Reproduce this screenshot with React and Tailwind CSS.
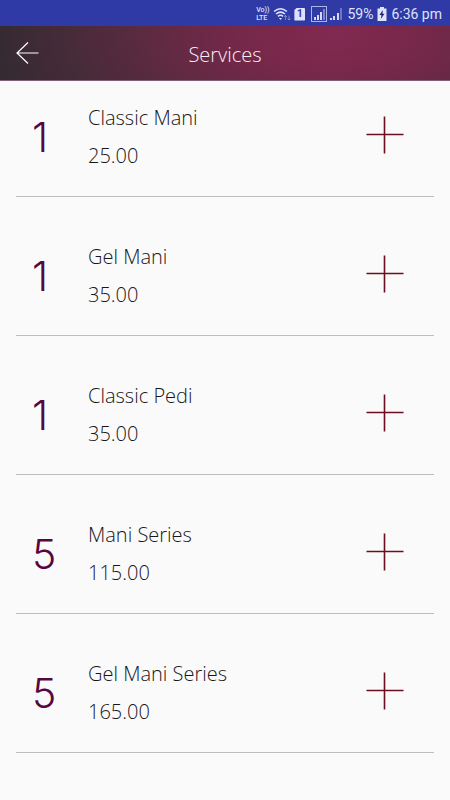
const services = [
    { id: 1, count: 1, name: "Classic Mani", price: "25.00" },
    { id: 2, count: 1, name: "Gel Mani", price: "35.00" },
    { id: 3, count: 1, name: "Classic Pedi", price: "35.00" },
    { id: 4, count: 5, name: "Mani Series", price: "115.00" },
    { id: 5, count: 5, name: "Gel Mani Series", price: "165.00" },
];

function StatusIcons() {
    return (
        <>
            <div className="flex flex-col font-medium text-[7px]">
                <span className="leading-[8px]">Vo))</span>
                <span className="leading-[8px]">LTE</span>
            </div>

            {/* Wifi */}
            <svg className="ml-1 w-[18px] h-[14px]" viewBox="0 0 18 14" fill="none" stroke="currentColor" strokeWidth="1.500">
                <path d="M1 4.500Q7.500-1 14 4.500M3 7q4.500-3.700 9 0M5 9.300q2.500-2 5 0" />
                <path d="M6 11h3l-1.500 2z" fill="currentColor" stroke="none" />
                <path d="M12.500 13V8.500M11 10l1.500-1.500L14 10M16 8.500V13M14.500 11.500L16 13l1.500-1.500" strokeWidth="0.8" opacity="0.55" />
            </svg>

            {/* Sim card */}
            <div className="ml-[3px] flex items-center justify-center w-[11px] h-[13px] rounded-[1px] bg-[#dfe2fa] text-[#2c36a0] text-[10px] font-bold leading-none [clip-path:polygon(25%_0,100%_0,100%_100%,0_100%,0_20%)]">
                1
            </div>

            {/* Signal, first sim */}
            <svg className="ml-[6px] w-4 h-4" viewBox="0 0 16 16" fill="none">
                <rect x="0.500" y="0.500" width="15" height="15" stroke="#aeb3e6" />
                <path d="M3 14v-3h2v3zM6 14V9h2v5zM9 14V6h2v8z" fill="#d4d8fa" />
                <path d="M12 14V3h2v11z" fill="#7c82cd" />
            </svg>

            {/* Signal, second sim */}
            <svg className="ml-[3px] w-[13px] h-[14px]" viewBox="0 0 13 14">
                <path d="M0 13v-2h2v2zM3 13V9h2v4zM7 13V6h2v7z" fill="#d4d8fa" />
                <path d="M10 13V1h2v12z" fill="#6d74c6" />
            </svg>
        </>
    );
}

function StatusBar() {
    return (
        <div className="flex items-center justify-end h-[26px] pr-2 pt-[2px] bg-[#2f3aa6] text-[#dfe2fa] font-['Roboto',sans-serif] font-normal">
            <StatusIcons />
            <span className="ml-1 text-sm leading-5">59%</span>
            <svg className="ml-1 w-[10px] h-[14px]" viewBox="0 0 10 14">
                <path d="M3 0h4v1.500h2.500V14h-9V1.500H3z" fill="#dfe2fa" />
                <path d="M5.800 3L2.500 8h2l-.7 4L7.500 6.800h-2z" fill="#20286f" />
            </svg>
            <span className="ml-1 text-sm leading-5">6:36 pm</span>
        </div>
    );
}

function Header() {
    return (
        <header className="grid grid-cols-[1fr_auto_1fr] items-center h-[55px] px-4 border-b border-[#806174] bg-[radial-gradient(75%_300%_at_74%_15%,#822951_0%,#742849_30%,#602a42_52%,#472b39_78%,#352a32_100%)]">
            <button type="button" aria-label="Back" className="justify-self-start text-white">
                <svg className="w-6 h-6" viewBox="0 0 24 24" fill="none" stroke="currentColor" strokeWidth="1.200">
                    <path d="M12 1.500L1 12L12 22.500M1 12H22.500" />
                </svg>
            </button>
            <h1 className="pt-1 text-xl leading-7 font-light text-[#f8f0f5]">Services</h1>
        </header>
    );
}

function ServiceItem({ service }) {
    return (
        <li className="flex items-center pt-[23px] pb-[26px] border-b border-[#bdbdbd]">
            <span className="w-[72px] pl-4 font-['Inter',sans-serif] text-[41px] leading-[48px] text-[#57063f]">{service.count}</span>
            <div className="flex-1 flex flex-col gap-[10px] text-xl leading-7 text-[#17171b]">
                <h2>{service.name}</h2>
                <p>{service.price}</p>
            </div>
            <button type="button" aria-label={`Add ${service.name}`} className="mr-[30px] mb-1 text-[#6b0f20]">
                <svg className="w-[38px] h-[38px]" viewBox="0 0 38 38" fill="none" stroke="currentColor" strokeWidth="1.600">
                    <path d="M18.500 .5v37M.5 18.500h37" />
                </svg>
            </button>
        </li>
    );
}

function App() {
    return (
        <div className="min-h-screen bg-[#fafafa] font-['Open_Sans',sans-serif] font-light">
            <StatusBar />
            <Header />
            <ul className="flex flex-col gap-[23px] px-4">
                {services.map((service) => (
                    <ServiceItem key={service.id} service={service} />
                ))}
            </ul>
        </div>
    );
}

export default App;
